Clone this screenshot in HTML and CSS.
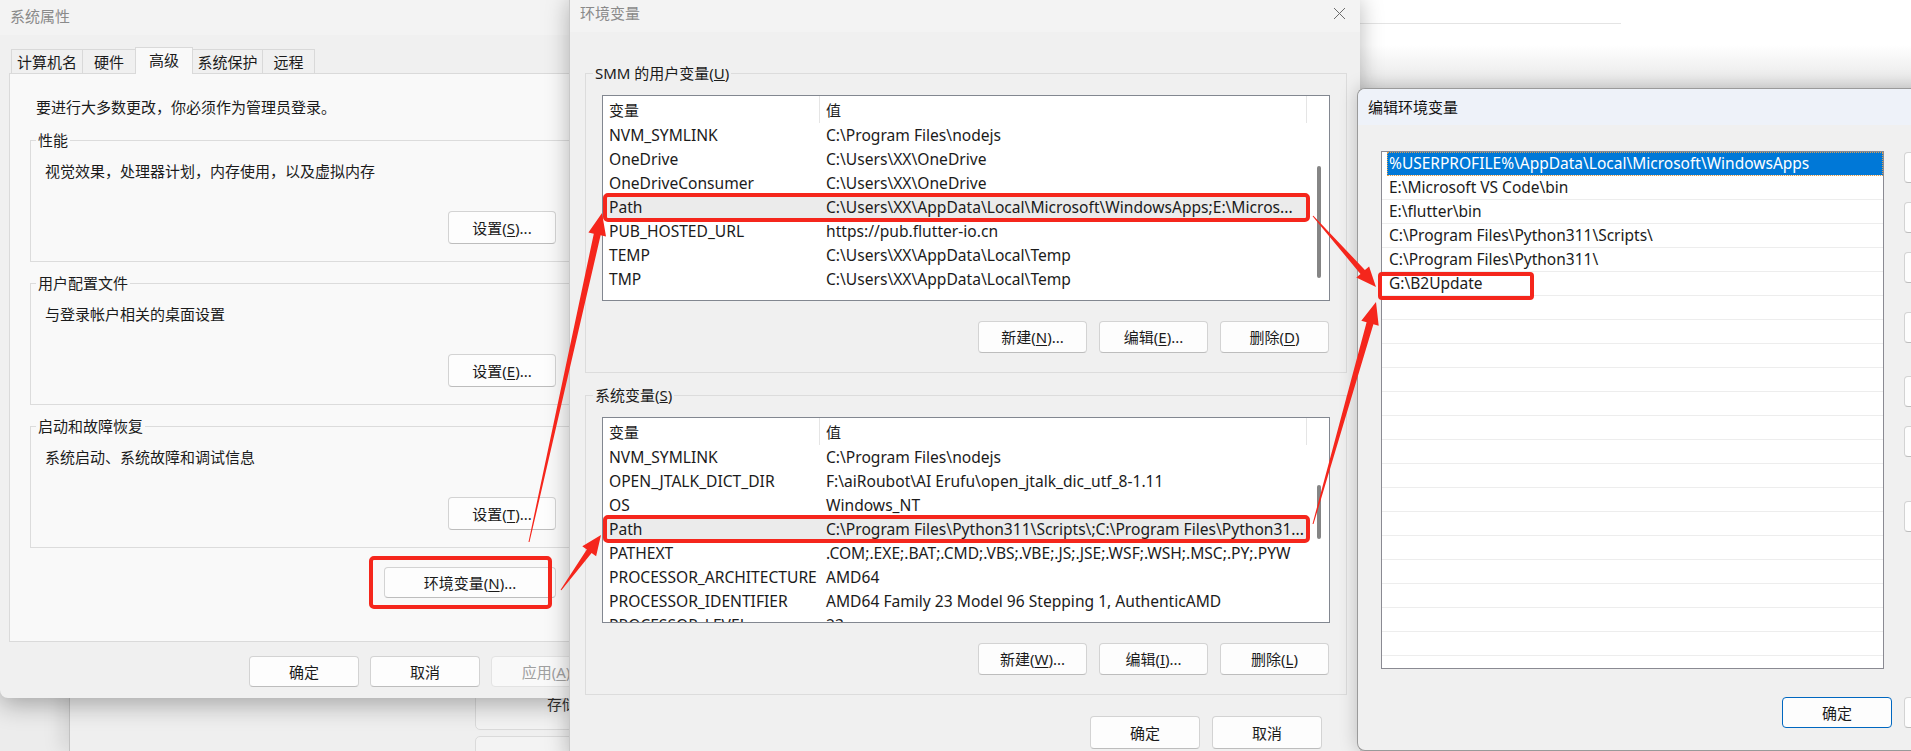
FILE: index.html
```html
<!DOCTYPE html>
<html lang="zh-CN">
<head>
  <meta charset="UTF-8">
  <title>环境变量</title>
  <link rel="stylesheet" href="styles.css">
</head>
<body>
  <div class="desk">
    <!-- 后面的设置窗口，只露出一点 -->
    <div class="bg-win bg-top"><div class="bg-line"></div></div>
    <div class="bg-win bg-set">
      <div class="card"><span>存储</span></div>
      <div class="card"></div>
    </div>

    <!-- 系统属性 -->
    <div class="win win-sys">
      <div class="title">系统属性</div>
      <div class="tabs">
        <div class="tab t1">计算机名</div>
        <div class="tab t2">硬件</div>
        <div class="tab t3 on">高级</div>
        <div class="tab t4">系统保护</div>
        <div class="tab t5">远程</div>
      </div>
      <div class="panel">
        <p class="note">要进行大多数更改，你必须作为管理员登录。</p>
        <fieldset class="grp">
          <legend>性能</legend>
          <p>视觉效果，处理器计划，内存使用，以及虚拟内存</p>
          <button class="btn btn-set">设置(<u>S</u>)...</button>
        </fieldset>
        <fieldset class="grp">
          <legend>用户配置文件</legend>
          <p>与登录帐户相关的桌面设置</p>
          <button class="btn btn-set">设置(<u>E</u>)...</button>
        </fieldset>
        <fieldset class="grp">
          <legend>启动和故障恢复</legend>
          <p>系统启动、系统故障和调试信息</p>
          <button class="btn btn-set">设置(<u>T</u>)...</button>
        </fieldset>
        <button class="btn btn-env">环境变量(<u>N</u>)...</button>
      </div>
      <div class="foot">
        <button class="btn">确定</button>
        <button class="btn">取消</button>
        <button class="btn" disabled>应用(<u>A</u>)</button>
      </div>
    </div>

    <!-- 环境变量 -->
    <div class="win win-env">
      <div class="title">
        <span>环境变量</span>
        <svg class="close" width="13" height="13" viewBox="0 0 13 13"><path d="M1 1L12 12M12 1L1 12" stroke="#6b6b6b" stroke-width="1"/></svg>
      </div>
      <div class="env-body">
        <fieldset class="vgrp">
          <legend>SMM 的用户变量(<u>U</u>)</legend>
          <div class="list">
            <div class="list-main">
              <div class="row head"><div class="c1">变量</div><div class="c2">值</div></div>
              <div class="row"><div class="c1">NVM_SYMLINK</div><div class="c2">C:\Program Files\nodejs</div></div>
              <div class="row"><div class="c1">OneDrive</div><div class="c2">C:\Users\XX\OneDrive</div></div>
              <div class="row"><div class="c1">OneDriveConsumer</div><div class="c2">C:\Users\XX\OneDrive</div></div>
              <div class="row sel"><div class="c1">Path</div><div class="c2">C:\Users\XX\AppData\Local\Microsoft\WindowsApps;E:\Micros...</div></div>
              <div class="row"><div class="c1">PUB_HOSTED_URL</div><div class="c2">https://pub.flutter-io.cn</div></div>
              <div class="row"><div class="c1">TEMP</div><div class="c2">C:\Users\XX\AppData\Local\Temp</div></div>
              <div class="row"><div class="c1">TMP</div><div class="c2">C:\Users\XX\AppData\Local\Temp</div></div>
            </div>
            <div class="scroll"><div class="thumb thumb-u"></div></div>
          </div>
          <div class="vbtns">
            <button class="btn">新建(<u>N</u>)...</button>
            <button class="btn">编辑(<u>E</u>)...</button>
            <button class="btn">删除(<u>D</u>)</button>
          </div>
        </fieldset>
        <fieldset class="vgrp">
          <legend>系统变量(<u>S</u>)</legend>
          <div class="list">
            <div class="list-main">
              <div class="row head"><div class="c1">变量</div><div class="c2">值</div></div>
              <div class="row"><div class="c1">NVM_SYMLINK</div><div class="c2">C:\Program Files\nodejs</div></div>
              <div class="row"><div class="c1">OPEN_JTALK_DICT_DIR</div><div class="c2">F:\aiRoubot\AI Erufu\open_jtalk_dic_utf_8-1.11</div></div>
              <div class="row"><div class="c1">OS</div><div class="c2">Windows_NT</div></div>
              <div class="row sel"><div class="c1">Path</div><div class="c2">C:\Program Files\Python311\Scripts\;C:\Program Files\Python31...</div></div>
              <div class="row"><div class="c1">PATHEXT</div><div class="c2">.COM;.EXE;.BAT;.CMD;.VBS;.VBE;.JS;.JSE;.WSF;.WSH;.MSC;.PY;.PYW</div></div>
              <div class="row"><div class="c1">PROCESSOR_ARCHITECTURE</div><div class="c2">AMD64</div></div>
              <div class="row"><div class="c1">PROCESSOR_IDENTIFIER</div><div class="c2">AMD64 Family 23 Model 96 Stepping 1, AuthenticAMD</div></div>
              <div class="row"><div class="c1">PROCESSOR_LEVEL</div><div class="c2">23</div></div>
            </div>
            <div class="scroll"><div class="thumb thumb-s"></div></div>
          </div>
          <div class="vbtns">
            <button class="btn">新建(<u>W</u>)...</button>
            <button class="btn">编辑(<u>I</u>)...</button>
            <button class="btn">删除(<u>L</u>)</button>
          </div>
        </fieldset>
        <div class="env-foot">
          <button class="btn">确定</button>
          <button class="btn">取消</button>
        </div>
      </div>
    </div>

    <!-- 编辑环境变量 -->
    <div class="win win-edit">
      <div class="title title-edit">编辑环境变量</div>
      <div class="edit-body">
        <div class="elist">
          <div class="eitem on">%USERPROFILE%\AppData\Local\Microsoft\WindowsApps</div>
          <div class="eitem">E:\Microsoft VS Code\bin</div>
          <div class="eitem">E:\flutter\bin</div>
          <div class="eitem">C:\Program Files\Python311\Scripts\</div>
          <div class="eitem">C:\Program Files\Python311\</div>
          <div class="eitem">G:\B2Update</div>
          <div class="eitem"></div><div class="eitem"></div><div class="eitem"></div>
          <div class="eitem"></div><div class="eitem"></div><div class="eitem"></div>
          <div class="eitem"></div><div class="eitem"></div><div class="eitem"></div>
          <div class="eitem"></div><div class="eitem"></div><div class="eitem"></div>
          <div class="eitem"></div><div class="eitem"></div><div class="eitem"></div>
        </div>
        <div class="side">
          <button class="btn">新建(<u>N</u>)</button>
          <button class="btn">编辑(<u>E</u>)</button>
          <button class="btn">浏览(<u>B</u>)...</button>
          <button class="btn">删除(<u>D</u>)</button>
          <button class="btn">上移(<u>U</u>)</button>
          <button class="btn">下移(<u>O</u>)</button>
          <button class="btn">编辑文本(<u>T</u>)...</button>
        </div>
      </div>
      <div class="edit-foot">
        <button class="btn btn-ok">确定</button>
        <button class="btn">取消</button>
      </div>
    </div>

    <!-- 截图上的红框和箭头 -->
    <svg class="marks" width="1911" height="751" viewBox="0 0 1911 751">
      <g fill="none" stroke="#f5261c" stroke-width="4">
        <rect x="371" y="558" width="179" height="49" rx="3"/>
        <rect x="605" y="195" width="703" height="25" rx="3"/>
        <rect x="605" y="517" width="703" height="24" rx="3"/>
        <rect x="1380" y="274" width="152" height="24" rx="2"/>
      </g>
      <g fill="#f5261c">
        <polygon points="528.5,541.9 593.8,233.7 588.4,232.6 602,213 606,236.4 600.6,235.3 529.5,542.1"/>
        <polygon points="560.6,589.7 586.8,549.4 582.3,546.2 601,535 596.1,556.2 591.6,553 561.4,590.3"/>
        <polygon points="1313.4,215.7 1364.9,270 1369.1,266.4 1376,287 1356.3,277.6 1360.5,274 1312.6,216.3"/>
        <polygon points="1312.5,523.9 1366.6,322.2 1361.3,320.7 1376,302 1378.7,325.7 1373.4,324.2 1313.5,524.1"/>
      </g>
    </svg>
  </div>
</body>
</html>
```

FILE: styles.css
```css
* {
  box-sizing: border-box;
}
body {
  margin: 0;
  background: #ececec;
  font-family: "Noto Sans", "Noto Sans CJK SC", sans-serif;
  font-size: 15px;
  line-height: 20px;
  color: #1b1b1b;
}
.desk {
  position: relative;
  width: 1911px;
  height: 751px;
  overflow: hidden;
}

/* 背景窗口 */
.bg-win {
  position: absolute;
  z-index: 1;
}
.bg-top {
  left: 1360px;
  top: 0;
  width: 560px;
  height: 90px;
  padding-top: 23px;
  background: linear-gradient(#fff 50%, #e4e4e4);
}
.bg-line {
  width: 261px;
  border-top: 1px solid #e4e4e4;
}
.bg-set {
  left: 69px;
  top: 600px;
  width: 520px;
  height: 151px;
  padding: 40px 0 0 405px;
  background: #efefef;
  border-left: 1px solid #c2c2c2;
  box-shadow: -8px 0 18px rgba(0, 0, 0, .10);
}
.card {
  width: 120px;
  height: 90px;
  margin-bottom: 6px;
  padding: 53px 0 0 71px;
  border: 1px solid #dadada;
  border-radius: 5px;
  background: #f3f3f3;
  color: #333;
}

/* 窗口公共部分 */
.win {
  position: absolute;
  overflow: hidden;
  background: #f0f0f0;
}
.title {
  padding-left: 10px;
  background: #f3f3f3;
  color: #8a8a8a;
}
.btn {
  display: block;
  height: 33px;
  padding: 0;
  border: 1px solid #d3d3d3;
  border-bottom-color: #bdbdbd;
  border-radius: 4px;
  background: #fdfdfd;
  font: inherit;
  color: #1b1b1b;
  text-align: center;
  white-space: nowrap;
}
.btn u {
  text-underline-offset: 2px;
}
.btn:disabled {
  color: #a0a0a0;
  background: #f9f9f9;
  border-color: #e3e3e3;
}
fieldset {
  margin: 0;
  min-width: 0;
}
legend {
  margin-left: -9px;
  padding: 0 2px;
}

/* 系统属性 */
.win-sys {
  left: 0;
  top: 0;
  width: 569px;
  height: 698px;
  border-radius: 0 0 0 8px;
  box-shadow: 0 6px 26px rgba(0, 0, 0, .32);
  z-index: 2;
}
.win-sys .title {
  height: 35px;
  line-height: 33px;
}
.tabs {
  display: flex;
  align-items: flex-end;
  height: 26px;
  margin-top: 12px;
  padding-left: 11px;
}
.tab {
  height: 24px;
  margin-right: -1px;
  border: 1px solid #d9d9d9;
  border-bottom: none;
  background: #f0f0f0;
  line-height: 24px;
  text-align: center;
}
.tab.on {
  position: relative;
  z-index: 1;
  height: 27px;
  margin-bottom: -1px;
  background: #f9f9f9;
}
.t1 { width: 72px; }
.t2 { width: 54px; }
.t3 { width: 58px; }
.t4 { width: 71px; }
.t5 { width: 53px; }
.panel {
  width: 580px;
  height: 569px;
  margin-left: 9px;
  padding: 0 0 0 20px;
  border: 1px solid #dadada;
  background: #f9f9f9;
}
.note {
  margin: 0;
  padding: 23px 0 0 6px;
}
.grp {
  margin-top: 13px;
  padding: 11px 0 17px 14px;
  border: 1px solid #dcdcdc;
}
.grp + .grp {
  margin-top: 11px;
}
.grp p {
  margin: 0;
}
.btn-set {
  width: 108px;
  margin: 30px 31px 0 auto;
}
.btn-env {
  width: 172px;
  height: 31px;
  margin: 19px 32px 0 auto;
}
.foot {
  display: flex;
  gap: 11px;
  margin-top: 14px;
  padding-left: 249px;
}
.foot .btn {
  width: 110px;
  height: 31px;
  flex: none;
}

/* 环境变量 */
.win-env {
  left: 569px;
  top: 0;
  width: 791px;
  height: 760px;
  border-left: 1px solid #c8c8c8;
  box-shadow: 0 0 22px rgba(0, 0, 0, .28);
  z-index: 3;
}
.win-env .title {
  display: flex;
  justify-content: space-between;
  height: 32px;
  padding-right: 14px;
  line-height: 27px;
}
.close {
  margin-top: 7px;
}
.env-body {
  padding: 0 13px 0 15px;
}
.vgrp {
  margin-top: 31px;
  padding: 12px 16px 19px;
  border: 1px solid #dcdcdc;
}
.vgrp + .vgrp {
  margin-top: 12px;
}
.list {
  display: flex;
  height: 206px;
  border: 1px solid #828790;
  background: #fff;
  overflow: hidden;
}
.list-main {
  flex: 1;
  min-width: 0;
}
.row {
  display: flex;
  height: 24px;
  font-size: 15.6px;
  line-height: 24px;
  white-space: nowrap;
}
.row.head {
  height: 27px;
  font-size: 15px;
  line-height: 29px;
}
.row.sel {
  background: #ebebeb;
}
.c1 {
  flex: none;
  width: 217px;
  padding-left: 6px;
  overflow: hidden;
}
.c2 {
  flex: 1;
  min-width: 0;
  padding-left: 6px;
  overflow: hidden;
}
.head .c1,
.head .c2 {
  border-right: 1px solid #e5e5e5;
}
.scroll {
  flex: none;
  width: 22px;
}
.thumb {
  width: 4px;
  margin-left: 10px;
  border-radius: 2px;
  background: #858585;
}
.thumb-u {
  height: 112px;
  margin-top: 70px;
}
.thumb-s {
  height: 54px;
  margin-top: 67px;
}
.vbtns {
  display: flex;
  justify-content: flex-end;
  gap: 12px;
  margin-top: 20px;
  padding-right: 1px;
}
.vbtns .btn {
  width: 109px;
  height: 32px;
}
.env-foot {
  display: flex;
  justify-content: flex-end;
  gap: 12px;
  margin-top: 21px;
  padding-right: 25px;
}
.env-foot .btn {
  width: 110px;
}

/* 编辑环境变量 */
.win-edit {
  left: 1357px;
  top: 88px;
  width: 600px;
  height: 663px;
  border: 1px solid #9a9a9a;
  border-right: 0;
  border-radius: 8px 0 0 8px;
  box-shadow: 0 0 18px rgba(0, 0, 0, .22);
  z-index: 4;
}
.title-edit {
  height: 36px;
  line-height: 36px;
  background: #eef2f9;
  color: #111;
}
.edit-body {
  display: flex;
  padding: 26px 0 0 23px;
}
.elist {
  flex: none;
  width: 503px;
  height: 518px;
  border: 1px solid #8a8a92;
  background: #fff;
  overflow: hidden;
}
.eitem {
  height: 24px;
  padding-left: 7px;
  border-bottom: 1px solid #ededed;
  font-size: 15.5px;
  line-height: 23px;
  white-space: nowrap;
}
.eitem.on {
  margin-left: 5px;
  padding-left: 2px;
  background: #0078d7;
  color: #fff;
  outline: 1px dotted #e0a050;
  outline-offset: -1px;
}
.side {
  flex: none;
  width: 110px;
  margin-left: 20px;
}
.side .btn {
  width: 110px;
  height: 31px;
}
.side .btn:nth-child(1) { margin-top: 1px; }
.side .btn:nth-child(2) { margin-top: 19px; }
.side .btn:nth-child(3) { margin-top: 19px; }
.side .btn:nth-child(4) { margin-top: 29px; }
.side .btn:nth-child(5) { margin-top: 33px; }
.side .btn:nth-child(6) { margin-top: 19px; }
.side .btn:nth-child(7) { margin-top: 44px; }
.edit-foot {
  display: flex;
  gap: 12px;
  margin-top: 28px;
  padding-left: 424px;
}
.edit-foot .btn {
  flex: none;
  width: 110px;
  height: 31px;
}
.btn-ok {
  border-color: #0067c0;
}

/* 标注层 */
.marks {
  position: absolute;
  left: 0;
  top: 0;
  z-index: 5;
  pointer-events: none;
}
```
